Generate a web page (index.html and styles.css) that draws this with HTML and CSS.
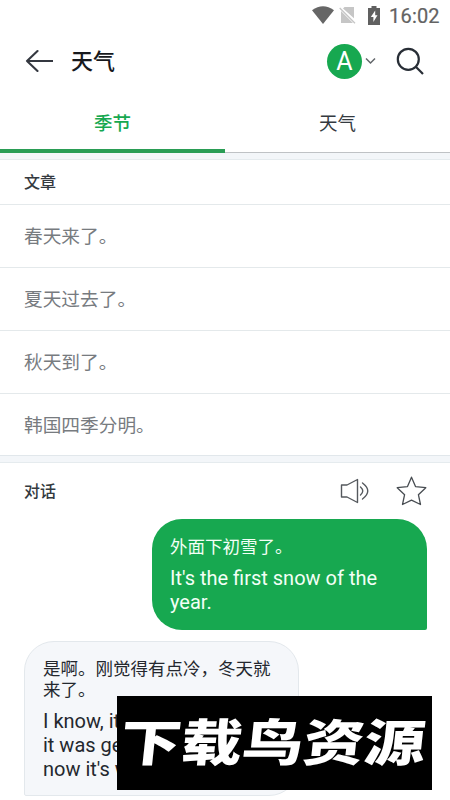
FILE: index.html
```html
<!DOCTYPE html>
<html lang="zh-CN">
<head>
<meta charset="utf-8">
<title>天气</title>
<link rel="stylesheet" href="styles.css">
</head>
<body>
<div class="screen">
  <div class="status">
    <svg class="wifi" width="22" height="18" viewBox="0 0 22 18"><path d="M0 4.2Q11-3.6 22 4.2L11 18Z" fill="#666"/></svg>
    <svg class="sim" width="17" height="18" viewBox="0 0 17 18"><path d="M5.5 1H15V12.2L4 2.5ZM2 5L14 17H2Z" fill="#c6c6c6"/><path d="M.7 2L16 17.2" stroke="#c6c6c6" stroke-width="1.3"/></svg>
    <svg class="battery" width="12" height="19" viewBox="0 0 12 19"><path d="M3.5 0H8.5V2H12V19H0V2H3.5Z" fill="#606060"/><path d="M7.2 4.5L2.8 11H5.4V16L9.5 9.2H7.2Z" fill="#fff"/></svg>
    <span class="clock">16:02</span>
  </div>
  <header class="header">
    <svg class="back" width="28" height="24" viewBox="0 0 28 24" fill="none" stroke="#343840" stroke-width="2.1" stroke-linecap="round" stroke-linejoin="round"><path d="M12.5 2L2 12L12.5 22M2 12H27.5"/></svg>
    <h1>天气</h1>
    <span class="avatar">A</span>
    <svg class="chevron" width="11" height="8" viewBox="0 0 11 8" fill="none" stroke="#62666a" stroke-width="1.5"><path d="M1 1.5L5.5 6L10 1.5"/></svg>
    <svg class="search" width="28" height="28" viewBox="0 0 28 28" fill="none" stroke="#282e36" stroke-width="2.2"><circle cx="12.3" cy="12.3" r="10.5"/><path d="M19.8 19.8L27 27"/></svg>
  </header>
  <nav class="tabs"><span class="tab active">季节</span><span class="tab">天气</span></nav>
  <div class="band"></div>
  <section>
    <h2 class="heading">文章</h2>
    <div class="row">春天来了。</div>
    <div class="row">夏天过去了。</div>
    <div class="row">秋天到了。</div>
    <div class="row last">韩国四季分明。</div>
  </section>
  <div class="band lower"></div>
  <section class="talk">
    <div class="talk-head">
      <h2>对话</h2>
      <svg class="speaker" width="30" height="26" viewBox="0 0 30 26" fill="none" stroke="#55595e" stroke-width="1.4" stroke-linejoin="round" stroke-linecap="round"><path d="M1.5 7H7L17.5 1.5V24.5L7 19H1.5Z"/><path d="M20.5 9Q25 13 20.5 17M22.5 5Q33 13 22.5 21"/></svg>
      <svg class="star" width="31" height="30" viewBox="0 0 31 30" fill="none" stroke="#484d52" stroke-width="1.3" stroke-linejoin="round"><path d="M15.5 1.2L19.5 10.6L29.8 11.7L22.4 18.7L24.5 28.5L15.5 24.2L6.5 28.5L8.6 18.7L1.2 11.7L11.5 10.6Z"/></svg>
    </div>
    <div class="bubble mine">
      <p class="zh">外面下初雪了。</p>
      <p class="en">It's the first snow of the<br>year.</p>
    </div>
    <div class="bubble theirs">
      <p class="zh">是啊。刚觉得有点冷，冬天就来了。</p>
      <p class="en">I know, it<br>it was ge<br>now it's w</p>
    </div>
  </section>
  <div class="banner"><span>下载鸟资源</span></div>
</div>
</body>
</html>
```
FILE: styles.css
```css
* { box-sizing: border-box; }
body { margin: 0; background: #fff; font-family: Roboto, "Noto Sans CJK SC", sans-serif; color: #343a40; }
h1, h2, p { margin: 0; }
svg { display: block; flex: none; }
.screen { position: relative; width: 450px; height: 800px; overflow: hidden; }
.status { display: flex; align-items: center; height: 30px; padding-left: 312px; }
.wifi { margin-right: 5px; }
.sim { margin-right: 12px; }
.clock { margin-left: 9px; padding-top: 1px; font-size: 20px; line-height: 30px; color: #636363; letter-spacing: .2px; -webkit-text-stroke: .2px #636363; }
.header { display: flex; align-items: center; height: 62px; padding-left: 25px; }
h1 { width: 256px; margin-left: 18px; padding-top: 2px; font-size: 22px; line-height: 32px; font-weight: 500; color: #17191d; }
.avatar { flex: none; width: 35px; height: 35px; border-radius: 50%; background: #17a850; color: #fff; font-size: 25px; line-height: 36px; text-align: center; }
.chevron { margin-left: 3px; }
.search { margin-left: 20px; }
.tabs { display: flex; height: 61px; }
.tab { flex: 1; border-bottom: 1px solid #bfc2c5; text-align: center; font-size: 18.5px; line-height: 64px; }
.tab.active { border-bottom: 4px solid #2a9d55; color: #17a850; font-weight: 500; }
.band { height: 7px; background: #f3f6f9; border-bottom: 1px solid #e5ebee; }
.band.lower { height: 8px; border-top: 1px solid #e1e7eb; }
.heading { height: 44px; padding-left: 24px; font-size: 16px; line-height: 46px; font-weight: 500; }
.row { height: 63px; padding-left: 24px; border-top: 1px solid #e4e9eb; color: #777b7f; font-size: 18.7px; line-height: 65px; }
.row.last { height: 62px; }
.talk { padding: 0 24px; }
.talk-head { display: flex; align-items: center; height: 56px; }
h2 { flex: none; font-size: 16px; font-weight: 500; }
.talk-head h2 { padding-top: 2px; line-height: 54px; }
.speaker { margin-left: auto; }
.star { margin: 0 -1px 0 26px; }
.bubble { width: 275px; }
.mine { height: 111px; margin-left: auto; margin-right: -.5px; padding: 18px 0 0 18.5px; border-radius: 30px 30px 2px 30px; background: #17a850; color: #f3fff6; }
.mine .en { margin-top: 8px; }
.theirs { height: 155px; margin-top: 11px; padding: 17px 22px 0 18px; border: 1px solid #e3e8ec; border-radius: 30px 30px 30px 2px; background: #f5f7fa; color: #24282e; }
.zh { font-size: 17.5px; line-height: 21px; }
.en { margin-top: 9px; font-size: 20px; line-height: 24px; white-space: nowrap; }
.theirs .en { margin-top: 8px; }
.banner { position: absolute; left: 117px; top: 696px; width: 315px; height: 94px; overflow: hidden; background: #000; display: flex; align-items: center; justify-content: center; }
.banner span { padding-bottom: 7px; font-family: "Noto Sans CJK SC", sans-serif; font-size: 50px; line-height: 87px; font-weight: 900; color: #fff; white-space: nowrap; transform: translateX(-2px) scaleX(1.22) skewX(-5deg); }
```
